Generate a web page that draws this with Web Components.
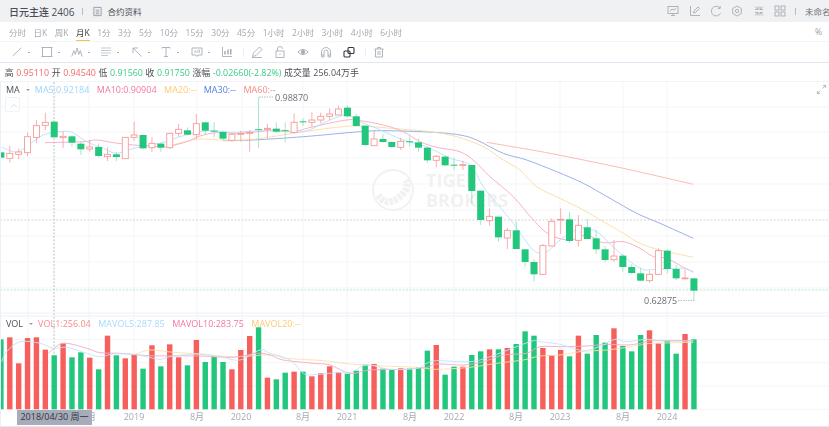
<!DOCTYPE html>
<html lang="zh">
<head>
<meta charset="utf-8">
<title>日元主连 2406</title>
<style>
  html, body { margin: 0; height: 100%; background: #fff; overflow: hidden; }
  body { font-family: "Open Sans", "Noto Sans CJK SC", sans-serif; }
</style>
</head>
<body>
<kline-app></kline-app>

<script>
const ICON = (body, size = 12) =>
    `<svg width="${size}" height="${size}" viewBox="0 0 12 12" fill="none" stroke="currentColor" stroke-width=".9">${body}</svg>`;

class KlineHeader extends HTMLElement {
    connectedCallback() {
        const right = [
            '<rect x="1" y="1.500" width="10" height="7"/><path d="M3 6l2-2 1.500 1L9 3.500M4 10.500h4M6 8.500v2"/>',
            '<path d="M1.500 1v9.500H11M4.500 8l.5-2 4-4 1.500 1.500-4 4z"/>',
            '<path d="M10 3.200A4.800 4.800 0 1 0 10.600 8M10.200 1v2.400H7.800"/>',
            '<path d="M6 1l4.300 2.500v5L6 11 1.700 8.500v-5z"/><circle cx="6" cy="6" r="1.700"/>',
            '<path d="M2 1.500l3 3M5 1.500v3H2M10 1.500l-3 3M7 1.500v3h3M2 10.500l3-3M5 10.500v-3H2M10 10.500l-3-3M7 10.500v-3h3"/>',
            '<rect x="1" y="1" width="4" height="4"/><rect x="7" y="1" width="4" height="4"/><rect x="1" y="7" width="4" height="4"/><rect x="7" y="7" width="4" height="4"/>'
        ].map(p => ICON(p)).join("");
        this.attachShadow({ mode: "open" }).innerHTML = `
            <style>
                :host { display: flex; justify-content: space-between; align-items: center; height: 22px; background: #f0f1f3; color: #4a4d55; overflow: hidden; }
                .left, .right { display: flex; align-items: center; }
                .left { padding-left: 9px; }
                .title { font-size: 10px; font-weight: 500; white-space: nowrap; }
                .sep { width: 1px; height: 7px; background: #b9bcc3; margin: 0 9px 0 8px; }
                .doc { color: #8d9198; display: flex; margin-right: 4px; }
                .data { font-size: 8.500px; white-space: nowrap; }
                .right { color: #a8acb4; gap: 9.400px; margin-right: -8px; }
                .right svg { display: block; }
                .name { font-size: 8.500px; color: #6d7078; white-space: nowrap; width: 32px; overflow: hidden; }
                .bar { width: 1px; height: 7px; background: #b9bcc3; margin-left: -1px; }
            </style>
            <div class="left">
                <span class="title">日元主连 2406</span>
                <span class="sep"></span>
                <span class="doc">${ICON('<path d="M2 1.500h8v9H2zM4 4.500h4M4 6.500h4M4 8.500h4"/>', 11)}</span>
                <span class="data">合约资料</span>
            </div>
            <div class="right">${right}<span class="bar"></span><span class="name">未命名</span></div>`;
    }
}

class KlineTabs extends HTMLElement {
    connectedCallback() {
        const tabs = ["分时", "日K", "周K", "月K", "1分", "3分", "5分", "10分", "15分", "30分", "45分", "1小时", "2小时", "3小时", "4小时", "6小时"];
        this.attachShadow({ mode: "open" }).innerHTML = `
            <style>
                :host { display: flex; align-items: center; justify-content: space-between; height: 20px; padding: 0 7px 0 9px; box-sizing: border-box; border-bottom: 1px solid #f4f5f7; background: #fff; font-size: 8.500px; color: #a4a8b0; }
                .tabs { display: flex; gap: 7.500px; height: 100%; }
                span { display: flex; align-items: center; white-space: nowrap; position: relative; }
                .on { color: #33363c; }
                .on::after { content: ""; position: absolute; left: 0; right: 0; bottom: 0; height: 1.500px; background: #f5c442; }
                .pct { font-size: 8.500px; color: #9ca0a8; }
            </style>
            <div class="tabs">${tabs.map(t => `<span class="${t === "月K" ? "on" : ""}">${t}</span>`).join("")}</div>
            <span class="pct">%</span>`;
    }
}

class KlineTools extends HTMLElement {
    connectedCallback() {
        const drop = '<i class="dot"></i>';
        const tools = [
            ['<path d="M1.700 10L10.300 1.700"/>', drop, 17],
            ['<rect x="1.500" y="1.500" width="9" height="9"/><path d="M.5 1.500h2M9.500 1.500h2M.5 10.500h2M9.500 10.500h2"/>', drop, 47],
            ['<path d="M.8 10.500l2-6 1.500 4 1.700-6.500 1.700 6.500 1.500-4 2 6"/>', drop, 77],
            ['<path d="M1 2h10M1 4.500h10M1 7h10M1 9.500h7" stroke="#c6c9ce" stroke-width="1.200"/>', drop, 106],
            ['<path d="M10.500 10.500L2 2M2 7V2h5"/>', drop, 137],
            ['<path d="M2 1.500h8M6 1.500v9M4 10.500h4M2 1.500v1M10 1.500v1"/>', drop, 166],
            ['<path d="M1 2h10v7H7l-1 1.500L5 9H1z"/><path d="M3.500 7l1-3 1 3M7 7V4h1.500v3" stroke-width=".6"/>', drop, 197],
            ['<path d="M1.500 1v9.500H11"/><path d="M4 5v3.500M7 3.500v5M9.800 3v5.500" stroke="#9a9ea6" stroke-width="1.300"/>', "", 227],
            ['<path d="M1.500 10.500l1-3.500 6-6 2.500 2.500-6 6zM1 11.500h10"/>', "", 257],
            ['<rect x="2" y="5" width="8" height="6.500"/><path d="M3.500 5V3a2.500 2.500 0 0 1 5 0M6 7.500v1.500"/>', "", 280],
            ['<path d="M.8 6Q6 .8 11.200 6 6 11.200 .8 6z"/><circle cx="6" cy="6" r="1.800" fill="currentColor"/>', "", 303],
            ['<path d="M1.500 11V6a4.500 4.500 0 0 1 9 0v5H8V6a2 2 0 0 0-4 0v5zM1.500 9H4M8 9h2.500"/>', "", 326],
            ['<rect x="5" y="1.500" width="6" height="6" rx="1" stroke-width="1.100"/><rect x="1" y="5" width="6" height="6" rx="1" stroke-width="1.100"/>', "", 349],
            ['<path d="M1.500 3h9M4.500 3V1.500h3V3M2.500 3v8h7V3M5 5v4M7 5v4"/>', "", 379]
        ];
        this.attachShadow({ mode: "open" }).innerHTML = `
            <style>
                :host { display: block; position: relative; height: 21px; box-sizing: border-box; border-bottom: 1px solid #dfe7f2; background: #fff; color: #a9adb5; }
                .tool { position: absolute; top: 4px; display: flex; align-items: center; }
                .tool.dark { color: #33363c; }
                .dot { position: absolute; left: 16.500px; top: 5.500px; width: 2px; height: 1.500px; background: #a9adb5; }
                .div { position: absolute; top: 6px; width: 1px; height: 9px; background: #eceef1; }
            </style>
            ${tools.map(([p, d, x]) => `<span class="tool ${x === 349 ? "dark" : ""}" style="left:${x - 6}px">${ICON(p)}${d}</span>`).join("")}
            <span class="div" style="left:243px"></span>
            <span class="div" style="left:365px"></span>`;
    }
}

class KlineInfo extends HTMLElement {
    connectedCallback() {
        this.attachShadow({ mode: "open" }).innerHTML = `
            <style>
                :host { display: flex; align-items: center; gap: 2.650px; height: 19px; padding: 1px 0 0 4.700px; box-sizing: border-box; border-bottom: 1px solid #f1f3f6; font-size: 8.900px; color: #4b4e55; white-space: nowrap; background: #fff; }
                .r { color: #f56a6a; }
                .g { color: #3ccb88; }
            </style>
            <span>高</span><span class="r">0.95110</span>
            <span>开</span><span class="r">0.94540</span>
            <span>低</span><span class="g">0.91560</span>
            <span>收</span><span class="g">0.91750</span>
            <span>涨幅</span><span class="g">-0.02660(-2.82%)</span>
            <span>成交量</span><span>256.04万手</span>`;
    }
}

// legend row over the top of a chart pane; the names come in through the slot
class KlineLegend extends HTMLElement {
    connectedCallback() {
        this.attachShadow({ mode: "open" }).innerHTML = `
            <style>
                :host { position: absolute; left: 6px; display: flex; align-items: center; font-size: 9px; color: #4b4e55; white-space: nowrap; line-height: 12px; }
                i { width: 0; height: 0; border: 2px solid transparent; border-top: 2.500px solid #9a9da5; border-bottom: 0; margin: 0 5px 0 6px; }
                .items { display: flex; gap: var(--gap, 7px); }
            </style>
            <span><slot name="name"></slot></span><i></i><div class="items"><slot></slot></div>`;
    }
}

class KlineChart extends HTMLElement {
    connectedCallback() {
        // [top, bottom, high, low, red?] read off the picture, 3x crop coordinates
        const pane1 = [
            [157,173,157,173,0],[160,175,137,188,1],[156,163,146,177,1],[110,158,98,168,1],[77,112,60,130,1],[67,76,38,90,1],
            [65,112,65,112,0],[109,113,95,144,1],[109,128,105,140,0],[131,148,125,165,0],[141,147,120,155,1],[141,168,130,172,0],
            [163,170,142,183,1],[163,171,155,183,0],[112,176,112,176,1],[105,112,65,122,1],[105,145,103,147,0],[130,143,112,157,1],
            [131,143,128,155,0],[100,143,100,147,1],[88,100,72,110,1],[91,104,82,106,0],[71,104,42,118,1],[67,92,65,105,0],
            [92,95,66,112,0],[96,116,92,122,0],[103,121,100,125,1],[100,103,92,125,1],[97,100,90,155,1],[87,89,-9,143,0],[85,88,72,115,1]
        ].map(c => c.map((v, j) => j < 4 ? 100 + v / 3 : v));
        const pane2 = [
            [116,125,97,128,0],[120,122,97,157,0],[97,127,70,130,1],[94,97,85,108,0],[90,97,67,110,1],[79,90,68,100,1],[72,79,55,90,1],
            [57,75,47,75,1],[53,79,45,82,0],[79,108,72,110,0],[107,165,107,168,0],[147,167,122,168,1],[147,156,132,158,0],[156,171,154,173,0],
            [154,172,143,180,1],[154,157,140,170,0],[157,173,145,185,0],[173,211,170,218,0],[199,211,195,232,1],[200,226,195,229,0],
            [224,227,203,240,0],[224,226,212,240,1]
        ].map(c => c.map((v, j) => j < 4 ? 90 + v / 3 : v));
        const pane3 = [
            [15,93,15,132,0],[92,180,92,195,0],[169,182,145,197,1],[170,232,170,245,0],[211,234,204,267,1],[211,267,183,267,0],[268,306,268,320,0],
            [306,343,298,365,0],[257,343,252,343,1],[184,258,175,258,1],[178,179,145,222,1],[178,243,156,248,0],[196,241,165,260,1],[202,237,177,237,0],
            [235,268,210,282,0],[268,300,258,307,0],[288,299,240,305,1],[287,321,282,335,0],[321,339,313,342,0],[340,362,323,362,0],[343,362,332,368,1],
            [272,343,265,343,1],[272,327,268,340,0],[327,355,315,360,0],[354,356,328,358,1],[355,392,355,422,0]
        ].map(c => c.map((v, j) => j < 4 ? 160 + v / 3 : v));
        const candles = [...pane1, ...pane2, ...pane3];

        // [top, red?] volume bars, same crops
        const vols = [[88,0],[82,1],[160,1],[84,1],[82,1],[119,1],[136,0],[100,1],[142,0],[127,0],[143,1],[178,0],[77,1],[136,0],[145,1],[134,1],
            [176,0],[106,1],[169,0],[103,1],[142,1],[166,0],[90,1],[156,0],[141,0],[156,0],[178,1],[120,1],[78,1],[52,0],[203,1],[208,0],
            [188,0],[185,1],[185,0],[199,1],[190,1],[169,1],[187,1],[191,0],[182,0],[164,0],[162,1],[176,0],[178,0],[175,1],[176,0],[172,0],
            [122,0],[105,1],[194,0],[170,0],[170,1],[135,0],[124,0],[118,1],[118,0],[114,1],[102,0],[64,0],[77,0],[114,1],[135,1],[120,1],
            [139,0],[77,1],[131,0],[75,0],[98,0],[55,1],[108,0],[124,0],[75,0],[61,1],[100,1],[93,0],[131,0],[72,1],[88,0]];

        const X = i => 0.9 + i * 8.885;
        const RED = "#f65f5c", GREEN = "#22c67c";

        // catmull-rom through the points
        const smooth = pts => {
            const f = n => n.toFixed(1);
            let d = `M${f(pts[0][0])} ${f(pts[0][1])}`;
            for (let i = 0; i < pts.length - 1; i++) {
                const p0 = pts[i - 1] || pts[i], p1 = pts[i], p2 = pts[i + 1], p3 = pts[i + 2] || p2;
                d += `C${f(p1[0] + (p2[0] - p0[0]) / 6)} ${f(p1[1] + (p2[1] - p0[1]) / 6)} ${f(p2[0] - (p3[0] - p1[0]) / 6)} ${f(p2[1] - (p3[1] - p1[1]) / 6)} ${f(p2[0])} ${f(p2[1])}`;
            }
            return d;
        };
        const line = (color, segs) => {
            const pts = segs.flatMap(([ox, oy, list]) => list.map(([x, y]) => [ox + x / 3, oy + y / 3]));
            return `<path d="${smooth(pts)}" fill="none" stroke="${color}" stroke-width=".9"/>`;
        };

        const MA5C = "#b5e0fb", MA10C = "#f6a9bf", MA20C = "#fbdc9f", MA30C = "#8fa9e6", MA60C = "#f9b4ac";
        const lines = [
            line(MA60C, [[270, 90, [[650,157],[840,190]]], [470, 160, [[460,25],[670,73]]]]),
            line(MA30C, [[0, 100, [[670,122],[760,120]]], [270, 90, [[100,140],[270,125],[350,122],[490,127],[570,135],[620,150],[700,190]]], [470, 160, [[170,0],[260,35],[340,70],[420,115],[500,160],[570,190],[670,235]]]]),
            line(MA20C, [[0, 100, [[500,140],[590,118],[660,120],[760,118]]], [270, 90, [[100,125],[200,112],[270,108],[400,118],[480,125],[560,140],[640,170]]], [470, 160, [[100,0],[150,30],[200,80],[270,115],[340,150],[400,185],[460,220],[510,250],[570,270],[670,292]]]]),
            line(MA10C, [[0, 100, [[135,128],[250,125],[290,120],[340,128],[400,135],[450,138],[500,140],[560,125],[600,108],[650,98],[720,100],[810,92]]], [270, 90, [[70,125],[130,110],[230,90],[270,92],[340,105],[400,125],[450,155],[500,172],[570,185]]], [470, 160, [[15,5],[60,50],[130,110],[190,180],[240,225],[300,240],[350,225],[400,248],[460,245],[510,265],[550,290],[590,295],[640,322],[670,335]]]]),
            line(MA5C, [[0, 100, [[5,142],[50,156],[85,135],[130,105],[180,95],[215,97],[260,125],[310,145],[350,160],[400,145],[450,135],[500,125],[540,110],[600,95],[640,92],[700,97],[760,93],[830,90]]], [270, 90, [[100,125],[180,90],[230,75],[270,95],[320,115],[400,150],[470,170],[540,205],[600,225],[640,290]]], [470, 160, [[80,130],[130,190],[190,270],[230,275],[270,240],[330,205],[380,215],[440,270],[510,325],[560,328],[640,325],[670,338]]]])
        ].join("");

        const volLines = [
            line("#fde0aa", [[0, 310, [[400,135],[450,120],[520,127],[600,132],[700,140]]], [270, 310, [[0,135],[50,145],[160,152],[240,162],[340,168],[440,172],[500,178],[600,172],[680,160],[760,150]]], [540, 310, [[0,138],[60,135],[120,125],[200,120],[260,112],[300,105],[340,100],[460,97]]]]),
            line("#f6a9bf", [[0, 310, [[145,130],[190,100],[260,115],[300,128],[360,130],[450,137],[600,138],[700,142],[770,130]]], [270, 310, [[0,135],[40,150],[130,160],[180,165],[240,190],[300,180],[400,178],[470,172],[500,162],[580,165],[640,155],[700,135],[770,130]]], [540, 310, [[0,110],[70,110],[140,108],[200,103],[260,105],[300,100],[340,92],[460,92]]]]),
            line("#bfe4fb", [[0, 310, [[5,155],[20,125],[60,95],[120,100],[160,115],[200,112],[260,130],[300,140],[340,132],[400,133],[440,140],[480,148],[520,138],[600,132],[660,140],[720,150],[780,120]]], [270, 310, [[0,130],[60,150],[100,190],[130,194],[200,188],[240,188],[290,165],[360,178],[440,175],[470,160],[500,152],[600,155],[660,140],[740,110],[790,92]]], [540, 310, [[0,95],[60,103],[110,118],[140,122],[190,105],[225,88],[260,95],[320,88],[370,93],[460,93]]]])
        ].join("");

        const candleSvg = candles.map((c, i) => {
            const [top, bot, hi, lo, red] = c, x = X(i);
            const wick = `<path d="M${x} ${hi}V${lo}" stroke="${red ? "#f79a98" : "#8fe0b9"}" stroke-width=".8"/>`;
            const h = Math.max(bot - top, .8);
            const body = red
                ? `<rect x="${x - 3}" y="${top}" width="6" height="${h}" fill="#fff" stroke="#f79a98" stroke-width=".9"/>`
                : `<rect x="${x - 3.5}" y="${top}" width="7" height="${h}" fill="${GREEN}"/>`;
            return wick + body;
        }).join("");

        const volSvg = vols.map(([v, red], i) => {
            const top = 310 + v / 3;
            return `<rect x="${X(i) - 2.700}" y="${top}" width="5.400" height="${409.3 - top}" fill="${red ? RED : GREEN}"/>`;
        }).join("");

        const gridX = [28, 89, 134, 197, 242, 303, 347, 410, 454, 516, 560, 623, 667];
        const gridY = [107, 132, 158, 184, 210, 236, 262, 288, 339.5, 362.7, 386, 409.3];
        const grid = gridX.map(x => `<path d="M${x} 82V410" stroke="#f4f5f8"/>`).join("")
            + gridY.map(y => `<path d="M0 ${y}H829" stroke="#f4f5f8"/>`).join("");

        const axis = [[134,"2019"],[197,"8月"],[241,"2020"],[303,"8月"],[347,"2021"],[410,"8月"],[454,"2022"],[516,"8月"],[560,"2023"],[623,"8月"],[667,"2024"],[89,"8月"]]
            .map(([x, t]) => `<text x="${x}" y="420" text-anchor="middle" font-size="9" fill="#a4a9b5">${t}</text>`).join("");

        this.attachShadow({ mode: "open" }).innerHTML = `
            <style>
                :host { display: block; position: relative; height: 345px; background: #fff; overflow: hidden; font-size: 9px; }
                svg.plot { display: block; font-family: "Open Sans", "Noto Sans CJK SC", sans-serif; }
                .tag { position: absolute; left: 17px; top: 328px; width: 75px; height: 14.500px; line-height: 14.500px; text-align: center; background: #a7acba; color: #33363c; font-size: 9px; white-space: nowrap; }
                .fold { position: absolute; left: 5px; top: 15px; width: 15px; height: 15px; box-sizing: border-box; border: 1px solid #f1f2f5; border-radius: 2px; color: #d5d8dd; background: #fff; }
                .fold svg { display: block; margin: 1.500px; }
                .expand { position: absolute; left: 816px; top: 2px; color: #a9adb5; }
                .vol { top: 236px; --gap: 7.500px; }
                .ma { top: 2px; --gap: 7.500px; }
                .edge { position: absolute; left: 0; top: 0; bottom: 0; width: 1px; background: #e8f0fa; }
            </style>
            <svg class="plot" width="829" height="345" viewBox="0 82 829 345">
                ${grid}
                <g fill="#f1f1f2" font-weight="700" font-size="18">
                    <circle cx="393" cy="190" r="20" fill="none" stroke="#f1f1f2" stroke-width="1.800"/>
                    <path d="M378 195Q386 207 398 198T406 180" fill="none" stroke="#f1f1f2" stroke-width="7" stroke-dasharray="3.500 1.200"/>
                    <text x="426" y="187">TIGER</text>
                    <text x="426" y="207">BROKERS</text>
                </g>
                <path d="M54 82V410" stroke="#a9acb2" stroke-width=".8" stroke-dasharray="2 1.500"/>
                <path d="M0 220H829" stroke="#cfc9c6" stroke-width=".8" stroke-dasharray="2 1.500"/>
                <path d="M0 290H829" stroke="#9fe6c3" stroke-width=".8" stroke-dasharray="2 1.500"/>
                ${lines}
                ${candleSvg}
                <path d="M259 97H274" stroke="#a9acb2" stroke-width=".8" stroke-dasharray="1.500 1"/>
                <text x="275" y="100.500" font-size="9" fill="#6a6d74">0.98870</text>
                <path d="M678 300.500H694" stroke="#a9acb2" stroke-width=".8" stroke-dasharray="1.500 1"/>
                <text x="644" y="304" font-size="9" fill="#6a6d74">0.62875</text>
                <path d="M0 313H829M0 316H829" stroke="#e6edf6" stroke-width=".8"/>
                ${volSvg}
                ${volLines}
                ${axis}
                <path d="M0 426.500H829" stroke="#dfe8f3"/>
            </svg>
            <span class="edge"></span>
            <span class="fold">${ICON('<path d="M3 7.500L6 4.500l3 3"/>')}</span>
            <span class="expand">${ICON('<path d="M7 5l3.500-3.500M7.500 1.500h3v3M5 7L1.500 10.500M1.500 7.500v3h3"/>', 11)}</span>
            <kline-legend class="ma">
                <span slot="name">MA</span>
                <span style="color:#9bd6fb">MA5:0.92184</span>
                <span style="color:#f2799f">MA10:0.90904</span>
                <span style="color:#fbcb74">MA20:--</span>
                <span style="color:#5480e2">MA30:--</span>
                <span style="color:#f48c82">MA60:--</span>
            </kline-legend>
            <kline-legend class="vol">
                <span slot="name">VOL</span>
                <span style="color:#f78d8a">VOL1:256.04</span>
                <span style="color:#a6dcfb">MAVOL5:287.85</span>
                <span style="color:#f2799f">MAVOL10:283.75</span>
                <span style="color:#fbcb74">MAVOL20:--</span>
            </kline-legend>
            <span class="tag">2018/04/30 周一</span>`;
    }
}

class KlineApp extends HTMLElement {
    connectedCallback() {
        this.attachShadow({ mode: "open" }).innerHTML = `
            <style>
                :host { display: block; width: 829px; height: 427px; overflow: hidden; filter: blur(.4px); }
            </style>
            <kline-header></kline-header>
            <kline-tabs></kline-tabs>
            <kline-tools></kline-tools>
            <kline-info></kline-info>
            <kline-chart></kline-chart>`;
    }
}

customElements.define("kline-header", KlineHeader);
customElements.define("kline-tabs", KlineTabs);
customElements.define("kline-tools", KlineTools);
customElements.define("kline-info", KlineInfo);
customElements.define("kline-legend", KlineLegend);
customElements.define("kline-chart", KlineChart);
customElements.define("kline-app", KlineApp);
</script>
</body>
</html>
